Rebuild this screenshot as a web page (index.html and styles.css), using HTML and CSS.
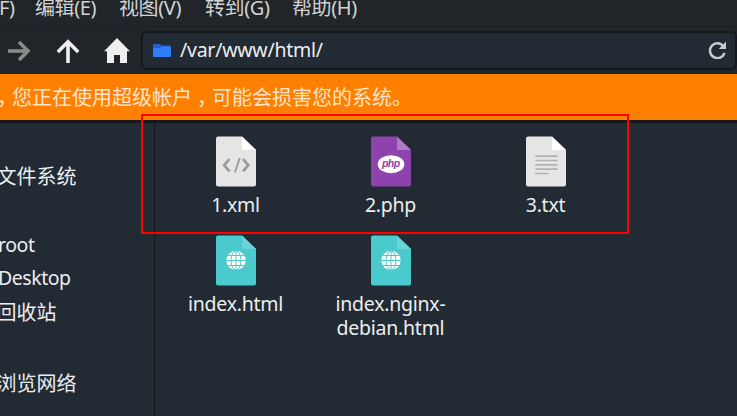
FILE: index.html
```html
<!DOCTYPE html>
<html lang="zh-CN">
<head>
<meta charset="utf-8">
<title>/var/www/html/</title>
<link rel="stylesheet" href="styles.css">
</head>
<body>
<div class="window">
  <nav class="menubar">
    <span class="menu menu-file">文件(F)</span><span class="menu menu-edit">编辑(E)</span><span class="menu">视图(V)</span><span class="menu menu-go">转到(G)</span><span class="menu">帮助(H)</span>
  </nav>
  <div class="toolbar">
    <svg class="tool forward" viewBox="0 0 24 24"><path d="M1 12H21M12 2.9L21 12L12 21.1"/></svg>
    <svg class="tool up" viewBox="0 0 24 24"><path d="M12 24V3M1.8 13L12 2.8L22.2 13"/></svg>
    <svg class="tool home" viewBox="0 0 26 26"><path d="M13 0L26 13.2H23V25H16V17H10V25H3V13.2H0Z"/></svg>
    <div class="path">
      <svg class="folder" viewBox="0 0 18 14"><path fill="#2460c8" d="M0 1.2Q0 0 1.2 0H7L9 1.5H17Q18 1.5 18 2.5V12H0Z"/><path fill="#317cfa" d="M0 4H6.5L9 2.6H18V12Q18 13 17 13H1Q0 13 0 12Z"/></svg>
      <span class="path-text">/var/www/html/</span>
      <svg class="reload" viewBox="0 0 18 18"><path class="arc" d="M15.3 5.2A7.4 7.4 0 1 0 16.5 11.8"/><path class="head" d="M18 .4V8H10.8Z"/></svg>
    </div>
  </div>
  <div class="notice"><span class="notice-text"><span class="comma">，</span>您正在使用超级帐户<span class="comma">，</span>可能会损害您的系统。</span></div>
  <div class="main">
    <aside class="sidebar">
      <div class="place fs">文件系统</div>
      <div class="place root">root</div>
      <div class="place desktop">Desktop</div>
      <div class="place trash">回收站</div>
      <div class="place network">浏览网络</div>
    </aside>
    <section class="files">
      <div class="file">
        <svg class="icon" viewBox="0 0 40 51"><path fill="#e5e5e5" d="M2 .5H26L40 14V48.5Q40 50.5 38 50.5H2Q0 50.5 0 48.5V2.5Q0 .5 2 .5Z"/><path fill="#fff" d="M26 .5L40 14H27Q26 14 26 13Z"/><path fill="none" stroke="#999" stroke-width="2.6" d="M13.5 23L8.2 29.2L13.5 35.4M27 23L32.3 29.2L27 35.4"/><path stroke="#999" stroke-width="1.8" d="M23.8 22L18.8 36.5"/></svg>
        <span class="name">1.xml</span>
      </div>
      <div class="file">
        <svg class="icon" viewBox="0 0 40 51"><path fill="#8e43ac" d="M2 .5H26L40 14V48.5Q40 50.5 38 50.5H2Q0 50.5 0 48.5V2.5Q0 .5 2 .5Z"/><path fill="#b07bc5" d="M26 .5L40 14H27Q26 14 26 13Z"/><ellipse cx="20" cy="28.2" rx="13.3" ry="9" fill="#fff"/><text class="php" x="19.8" y="31.2" text-anchor="middle">php</text></svg>
        <span class="name">2.php</span>
      </div>
      <div class="file">
        <svg class="icon" viewBox="0 0 40 51"><path fill="#e5e5e5" d="M2 .5H26L40 14V48.5Q40 50.5 38 50.5H2Q0 50.5 0 48.5V2.5Q0 .5 2 .5Z"/><path fill="#fff" d="M26 .5L40 14H27Q26 14 26 13Z"/><path stroke="#b2b2b2" stroke-width="1.7" stroke-linecap="round" d="M10 20.2H31M10 24.5H31M10 28.8H31M10 33.2H31M10 37.5H22"/></svg>
        <span class="name">3.txt</span>
      </div>
      <div class="file">
        <svg class="icon" viewBox="0 0 40 51"><path fill="#4bcacd" d="M2 .5H26L40 14V48.5Q40 50.5 38 50.5H2Q0 50.5 0 48.5V2.5Q0 .5 2 .5Z"/><path fill="#6bd4d8" d="M26 .5L40 14H27Q26 14 26 13Z"/><circle cx="20" cy="25.5" r="9.7" fill="#fff"/><path class="grid" d="M20 16V35M10 25.5H30M12 20.5H28M12 30.5H28"/><ellipse class="grid" cx="20" cy="25.5" rx="5" ry="9.5"/></svg>
        <span class="name">index.html</span>
      </div>
      <div class="file">
        <svg class="icon" viewBox="0 0 40 51"><path fill="#4bcacd" d="M2 .5H26L40 14V48.5Q40 50.5 38 50.5H2Q0 50.5 0 48.5V2.5Q0 .5 2 .5Z"/><path fill="#6bd4d8" d="M26 .5L40 14H27Q26 14 26 13Z"/><circle cx="20" cy="25.5" r="9.7" fill="#fff"/><path class="grid" d="M20 16V35M10 25.5H30M12 20.5H28M12 30.5H28"/><ellipse class="grid" cx="20" cy="25.5" rx="5" ry="9.5"/></svg>
        <span class="name">index.nginx-<br>debian.html</span>
      </div>
    </section>
  </div>
  <div class="highlight"></div>
</div>
</body>
</html>
```

FILE: styles.css
```css
* { box-sizing: border-box; }
body {
  margin: 0;
  background: #222a33;
  color: #eceeef;
  font: 19.5px/24px "Noto Sans", "Noto Sans CJK SC", sans-serif;
}
svg { display: block; flex: none; }
.window {
  position: relative;
  width: 737px;
  height: 416px;
  overflow: hidden;
  display: flex;
  flex-direction: column;
}
.menubar {
  height: 27px;
  flex: none;
  display: flex;
  gap: 20.5px;
  background: #212529;
  border-bottom: 1px solid #1c2023;
  color: #d2d3d4;
  font-size: 20px;
  line-height: 15px;
  white-space: nowrap;
}
.menu { width: 65.5px; flex: none; letter-spacing: -0.4px; }
.menu-file { margin-left: -51px; text-align: right; }
.menu-edit { width: 63.5px; }
.menu-go { width: 66.5px; }
.toolbar {
  height: 47px;
  flex: none;
  display: flex;
  align-items: center;
  background: #212529;
}
.tool { fill: none; stroke: #eee; stroke-width: 3.6; }
.forward { width: 24px; height: 24px; margin-left: 7px; stroke: #8b8b8b; }
.up { width: 24px; height: 24px; margin-left: 24.5px; }
.home { width: 26px; height: 26px; margin-left: 24.5px; fill: #eee; stroke: none; }
.path {
  flex: 1;
  height: 39px;
  margin-left: 11px;
  padding: 0 9.5px 0 10px;
  display: flex;
  align-items: center;
  background: #222a33;
  border: 2px solid #14191e;
  border-radius: 6px;
}
.folder { width: 18px; height: 14px; }
.path-text { margin-left: 9px; letter-spacing: -0.25px; line-height: 22px; margin-bottom: 1px; }
.reload { width: 18px; height: 18px; margin: 0 0 1px auto; }
.arc { fill: none; stroke: #c8cacc; stroke-width: 2.4; }
.head { fill: #c8cacc; }
.notice {
  height: 49px;
  flex: none;
  background: #ff7f00;
  border-bottom: 3px solid #14181b;
  color: #ffe5cc;
  font-size: 20px;
  line-height: 47px;
  white-space: nowrap;
}
.notice-text { margin-left: -8px; }
.comma { padding-left: 5px; margin-right: -5px; }
.main { flex: 1; display: flex; }
.sidebar {
  width: 155px;
  border-right: 1px solid #11161b;
  padding-top: 42px;
  white-space: nowrap;
}
.place { height: 24px; font-size: 20px; margin-left: -3.5px; }
.root, .desktop { font-size: 19.5px; letter-spacing: -0.45px; }
.root { margin: 44px 0 0 -2px; }
.desktop { margin: 9px 0 0 -2px; }
.trash { margin-top: 11px; }
.network { margin-top: 47px; }
.files {
  display: grid;
  grid-template-columns: repeat(3, 155px);
  grid-auto-rows: 99px;
  padding: 13px 0 0 3px;
}
.file { display: flex; flex-direction: column; align-items: center; text-align: center; }
.icon { width: 40px; height: 51px; }
.name { margin-top: 6px; letter-spacing: -0.25px; }
.php { font: italic bold 10.5px "Liberation Sans", sans-serif; letter-spacing: -0.5px; fill: #8e43ac; }
.grid { fill: none; stroke: #4bcacd; stroke-width: 1; }
.highlight {
  position: absolute;
  left: 141px;
  top: 114px;
  width: 488px;
  height: 120px;
  border: 2px solid #f00;
}
```
